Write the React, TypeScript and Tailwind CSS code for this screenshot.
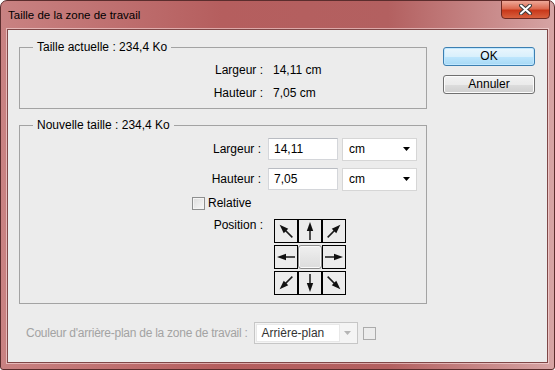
import React from 'react';

const font = { fontFamily: '"Liberation Sans", Arial, sans-serif' };

function Arrow({ angle }: { angle: number }) {
  return (
    <svg width="22" height="22" viewBox="0 0 22 22">
      <g transform={`rotate(${angle} 11 11)`}>
        <line x1="11" y1="20" x2="11" y2="8" stroke="#1a1a1a" strokeWidth="1.5" />
        <polygon points="11,2 7.8,11 14.2,11" fill="#111" />
      </g>
    </svg>
  );
}

function Cell({ angle }: { angle: number }) {
  return (
    <div className="w-[24px] h-[24px] border border-black flex items-center justify-center bg-[#ececec]">
      <Arrow angle={angle} />
    </div>
  );
}

function DropArrow({ color = '#000' }: { color?: string }) {
  return (
    <svg width="7" height="4" viewBox="0 0 7 4">
      <polygon points="0,0 7,0 3.5,4" fill={color} />
    </svg>
  );
}

export default function App() {
  return (
    <div
      className="w-[555px] h-[370px] rounded-t-[7px] rounded-b-[3px] border border-[#5b2d2d] bg-[linear-gradient(90deg,#c98282_0%,#b55e5e_40%,#b36060_70%,#d6a4a4_100%)] flex flex-col text-[12px] leading-[13px] text-black"
      style={font}
    >
      <div className="h-[28px] flex items-start justify-between pl-[7px]">
        <span className="mt-[8px] text-[11.5px] text-black">Taille de la zone de travail</span>
        <div className="w-[49px] h-[19px] mr-[4px] -mt-px rounded-b-[4px] border border-[#6e2a22] bg-[linear-gradient(180deg,#eea898_0%,#dc6a50_45%,#c8381a_55%,#d8603e_100%)] flex items-center justify-center">
          <svg width="13" height="11" viewBox="0 0 13 11">
            <path d="M2 1.5 L11 9.5 M11 1.5 L2 9.5" stroke="#3b3b3b" strokeWidth="4" strokeLinecap="round" />
            <path d="M2 1.5 L11 9.5 M11 1.5 L2 9.5" stroke="#ffffff" strokeWidth="2" strokeLinecap="round" />
          </svg>
        </div>
      </div>

      <div className="mx-[6px] h-[334px] border border-[#7f4747] bg-[#ececec] shadow-[0_0_0_1px_rgba(255,230,230,0.55)] flex pl-[11px] pt-[11px] gap-[16px]">
        <div className="w-[408px] flex flex-col">
          <fieldset className="h-[68px] border border-[#a3a3a3]">
            <legend className="ml-[13px] px-[4px] leading-[13px]">Taille actuelle : 234,4 Ko</legend>
            <div className="mt-[5px] flex flex-col">
              <div className="h-[23px] flex items-center">
                <span className="w-[243px] text-right">Largeur :</span>
                <span className="ml-[10px]">14,11 cm</span>
              </div>
              <div className="h-[23px] flex items-center">
                <span className="w-[243px] text-right">Hauteur :</span>
                <span className="ml-[10px]">7,05 cm</span>
              </div>
            </div>
          </fieldset>

          <fieldset className="mt-[10px] h-[185px] border border-[#a3a3a3]">
            <legend className="ml-[13px] px-[4px] leading-[13px]">Nouvelle taille : 234,4 Ko</legend>
            <div className="mt-[6px] flex flex-col">
              <div className="h-[22px] flex items-center">
                <span className="w-[241px] text-right">Largeur :</span>
                <div className="ml-[7px] w-[70px] h-[22px] border border-[#d4d6da] border-t-[#b9bcc2] bg-white pl-[5px] flex items-center">14,11</div>
                <div className="ml-[4px] w-[75px] h-[23px] border border-[#d6d6d6] bg-white pl-[6px] pr-[6px] flex items-center justify-between">
                  <span>cm</span>
                  <DropArrow />
                </div>
              </div>
              <div className="mt-[8px] h-[22px] flex items-center">
                <span className="w-[241px] text-right">Hauteur :</span>
                <div className="ml-[7px] w-[70px] h-[22px] border border-[#d4d6da] border-t-[#b9bcc2] bg-white pl-[5px] flex items-center">7,05</div>
                <div className="ml-[4px] w-[75px] h-[23px] border border-[#d6d6d6] bg-white pl-[6px] pr-[6px] flex items-center justify-between">
                  <span>cm</span>
                  <DropArrow />
                </div>
              </div>
              <div className="mt-[7px] h-[13px] flex items-center ml-[172px]">
                <div className="w-[13px] h-[13px] border border-[#8e8f8f] bg-[linear-gradient(135deg,#dcdcdc,#f8f8f8)] shadow-[inset_0_0_0_1px_#f4f4f4]" />
                <span className="ml-[3px]">Relative</span>
              </div>
              <div className="mt-[9px] flex items-start">
                <span className="w-[243px] text-right leading-[13px]">Position :</span>
                <div className="ml-[11px] flex flex-col gap-[2px]">
                  <div className="flex">
                    <Cell angle={-45} />
                    <Cell angle={0} />
                    <Cell angle={45} />
                  </div>
                  <div className="flex">
                    <Cell angle={-90} />
                    <div className="w-[24px] h-[24px] rounded-[3px] border border-[#8c8c8c] bg-[linear-gradient(180deg,#f0f0f0,#dcdcdc)] shadow-[inset_0_0_0_1px_#fafafa]" />
                    <Cell angle={90} />
                  </div>
                  <div className="flex">
                    <Cell angle={-135} />
                    <Cell angle={180} />
                    <Cell angle={135} />
                  </div>
                </div>
              </div>
            </div>
          </fieldset>

          <div className="mt-[18px] h-[22px] flex items-center pl-[7px]">
            <span className="text-[#a3a3a3] tracking-[-0.25px]">Couleur d'arrière-plan de la zone de travail :</span>
            <div className="ml-[6px] w-[104px] h-[22px] border border-[#c6c6c6] bg-[#f4f4f4] flex items-center p-[1px]">
              <div className="w-[84px] h-full bg-white border border-[#e8e8e8] pl-[5px] flex items-center text-[#333]">Arrière-plan</div>
              <div className="flex-1 flex items-center justify-center">
                <DropArrow color="#b5b5b5" />
              </div>
            </div>
            <div className="ml-[5px] w-[13px] h-[13px] border border-[#ababab]" />
          </div>
        </div>

        <div className="w-[92px] pt-[6px] flex flex-col gap-[9px]">
          <button className="h-[19px] rounded-[3px] border border-[#3c7fb1] bg-[linear-gradient(180deg,#eaf6fd_0%,#d9f0fc_50%,#bee6fd_51%,#a7d9f5_100%)] shadow-[inset_0_0_0_1px_#bfe7ff] flex items-center justify-center leading-[13px]">
            OK
          </button>
          <button className="h-[19px] rounded-[3px] border border-[#707070] bg-[linear-gradient(180deg,#f2f2f2_0%,#ebebeb_50%,#dddddd_51%,#cfcfcf_100%)] shadow-[inset_0_0_0_1px_#fcfcfc] flex items-center justify-center leading-[13px]">
            Annuler
          </button>
        </div>
      </div>
    </div>
  );
}
